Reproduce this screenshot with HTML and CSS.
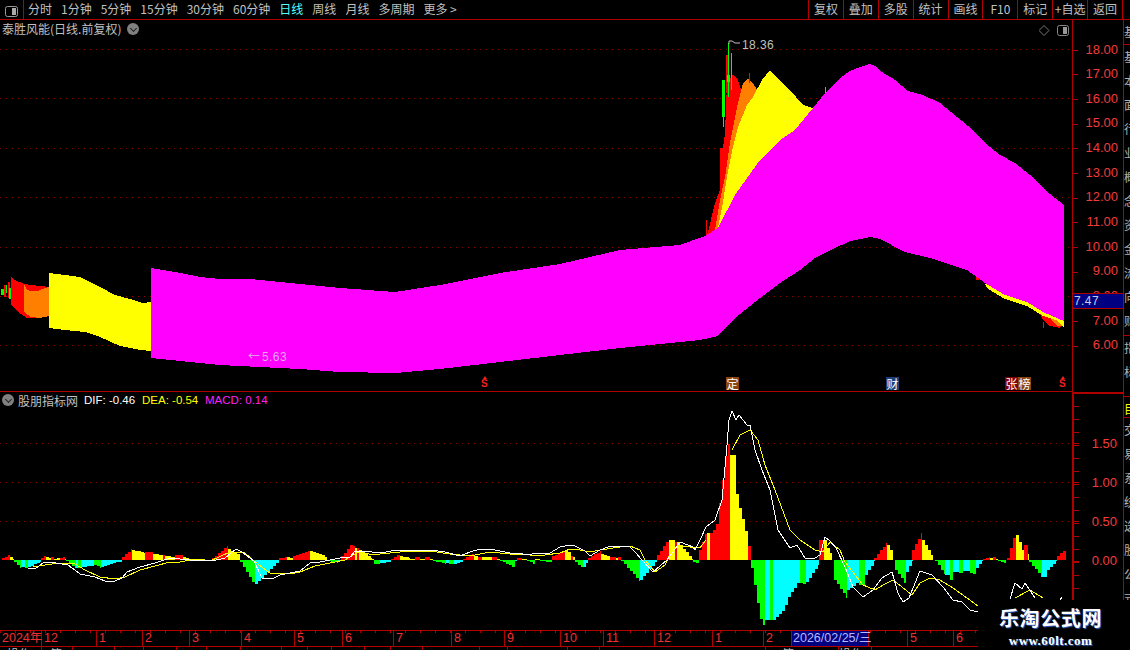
FILE: index.html
```html
<!DOCTYPE html>
<html lang="zh-CN">
<head>
    <meta charset="UTF-8">
    <link rel="stylesheet" href="styles.css">
    <title>泰胜风能</title>
</head>
<body>

<div class="toolbar">
    <div class="layout-btn">
        <svg width="14" height="12" viewBox="0 0 14 12"><rect x="0.5" y="0.5" width="12" height="10" rx="2" fill="none" stroke="#999"/><rect x="7" y="2" width="4" height="7" fill="#aaa"/></svg>
    </div>
    <div class="periods">
        <span>分时</span><span>1分钟</span><span>5分钟</span><span>15分钟</span><span>30分钟</span><span>60分钟</span>
        <span class="active">日线</span><span>周线</span><span>月线</span><span>多周期</span><span>更多 &gt;</span>
    </div>
    <div class="tools">
        <span>复权</span><span>叠加</span><span>多股</span><span>统计</span><span>画线</span><span>F10</span><span>标记</span><span>+自选</span><span>返回</span>
    </div>
</div>

<div class="workspace">
    <div class="charts">
        <div class="price-panel">
            <svg class="chart" width="1072" height="371" viewBox="0 20 1072 371">
                <g class="grid">
                    <line x1="0" x2="1072" y1="49.5" y2="49.5"/><line x1="0" x2="1072" y1="98.5" y2="98.5"/>
                    <line x1="0" x2="1072" y1="148.5" y2="148.5"/><line x1="0" x2="1072" y1="197.5" y2="197.5"/>
                    <line x1="0" x2="1072" y1="247.5" y2="247.5"/><line x1="0" x2="1072" y1="296.5" y2="296.5"/>
                    <line x1="0" x2="1072" y1="345.5" y2="345.5"/>
                </g>
                <g class="bands">
                    <!-- candles at the very start -->
                    <path fill="#ff0000" d="M4 285h2v12h-2zM8 282h2v16h-2z"/>
                    <path fill="#00ff00" d="M1 289h3v6h-3zM6 285h1v8h-1zM9 288h2v11h-2z"/>
                    <polygon fill="#ff0000" points="11,277 15,280 24,284 49,287 49,316 34,318 27,318 18,312 11,305"/>
                    <polygon fill="#ff8000" points="24,284 27,290 31,291 38,291 45,288 49,287 49,316 40,318 31,317 24,312"/>
                    <polygon fill="#ffff00" points="49,273 65,275 80,277 90,282 100,287 115,295 130,299 142,303 151,302 151,351 140,350 120,346 100,337 85,332 65,330 49,328"/>

                    <polygon fill="#ff0000" points="706,236 708,232 715,203 720,190 720,148 723,148 725,133 727,83 733,74 738,80 743,95 750,120 730,230"/>
                    <polygon fill="#ff8000" points="715,230 720,200 725,177 730,143 737,107 743,83 748,79 753,83 757,90 765,120 730,230"/>
                    <polygon fill="#ffff00" points="718,228 722,208 727,177 733,147 738,127 747,105 753,97 762,80 770,70 777,78 790,90 803,105 813,108 830,120 740,220"/>
                    <path fill="#ff0000" d="M706 220h1v16h-1zM749 73h1v10h-1zM721 148h2v20h-2zM726 55h2v38h-2z"/>
                    <path fill="#00ff00" d="M722 80h3v37h-3zM723 117h1v10h-1zM728 43h1v54h-1zM727 75h3v7h-3zM731 53h1v37h-1zM825 87h1v6h-1z"/>

                    <path fill="#ff0000" d="M976 277h3v3h-3zM1043 322h1v6h-1z"/>
                    <polygon fill="#ff0000" points="1037,308 1043,320 1050,326 1060,328 1064,322 1044,308"/>
                    <polygon fill="#ff8000" points="1048,314 1052,321 1057,326 1064,326 1064,318"/>
                    <polygon fill="#ffff00" points="985,284 988,289 1005,299 1027,306 1043,316 1056,320 1064,328 1064,318 1044,308 1027,298 1005,291 988,281"/>
                    <polygon fill="#ff00ff" points="151,268 175,272 200,277 220,279 250,279 300,284 340,288 395,292 440,285 500,273 560,264 620,250 680,245 705,236 718,228 735,195 760,160 780,140 795,130 813,108 825,93 840,78 850,71 860,67 870,64 875,66 882,72 895,80 908,91 923,95 940,103 957,117 973,130 985,143 1000,155 1015,163 1030,175 1045,190 1064,205 1064,321 1043,312 1027,302 1005,295 988,285 967,270 960,268 930,258 905,252 880,239 870,237 850,241 833,249 815,258 800,270 780,283 760,298 735,318 718,336 700,340 620,348 560,355 500,362 440,369 395,373 340,372 300,369 220,365 151,358"/>
                </g>
                <path class="flag" d="M729 41v3M729 41h3l3 2h5" fill="none"/>
            </svg>

            <div class="chart-title">泰胜风能(日线.前复权)<i class="chevron"></i></div>
            <div class="corner-icons">
                <svg width="30" height="12" viewBox="0 0 30 12"><path d="M5 0.5l5 5-5 5-5-5z" fill="none" stroke="#777"/><rect x="18.5" y="0.5" width="11" height="10" rx="2" fill="none" stroke="#888"/><rect x="24" y="2" width="4" height="7" fill="#999"/></svg>
            </div>
            <span class="price-note high">18.36</span>
            <span class="price-note low"><i class="arrow">←</i>5.63</span>
            <span class="mark s-mark s-a">S</span>
            <span class="mark box-mark brown ding">定</span>
            <span class="mark box-mark blue cai">财</span>
            <span class="mark box-mark maroon zhang">张</span>
            <span class="mark box-mark brown bang">榜</span>
            <span class="mark s-mark s-b">S</span>
        </div>

        <div class="macd-panel">
            <svg id="macd" class="chart" width="1072" height="238" viewBox="0 392 1072 238">
                <g class="grid">
                    <line x1="0" x2="1072" y1="443.5" y2="443.5"/>
                    <line x1="0" x2="1072" y1="482.5" y2="482.5"/>
                    <line x1="0" x2="1072" y1="521.5" y2="521.5"/>
                </g>
            </svg>
            <div class="legend">
                <i class="chevron"></i><span class="legend-name">股朋指标网</span>
                <span class="dif">DIF: -0.46</span><span class="dea">DEA: -0.54</span><span class="macd-val">MACD: 0.14</span>
            </div>
        </div>

        <div class="time-axis">
            <div class="months">
                <span class="m" style="width:42px">2024年</span><span class="m" style="width:55px">12</span><span class="m" style="width:46px">1</span><span class="m" style="width:47px">2</span><span class="m" style="width:52px">3</span><span class="m" style="width:53px">4</span><span class="m" style="width:48px">5</span><span class="m" style="width:51px">6</span><span class="m" style="width:58px">7</span><span class="m" style="width:53px">8</span><span class="m" style="width:56px">9</span><span class="m" style="width:43px">10</span><span class="m" style="width:51px">11</span><span class="m" style="width:58px">12</span><span class="m" style="width:51px">1</span><span class="m" style="width:28px">2</span><span class="m date">2026/02/25/三</span><span class="m" style="width:39px"></span><span class="m" style="width:46px">5</span><span class="m" style="width:119px">6</span>
            </div>
            <div class="sub-row">
                <span class="first" style="width:42px">操作</span><span class="second" style="width:31px">筹</span><span style="width:42px"></span><span style="width:29px"></span><span style="width:33px"></span><span style="width:30px"></span><span style="width:34px"></span><span style="width:41px"></span><span style="width:26px"></span><span style="width:24px"></span><span style="width:33px"></span><span style="width:26px"></span><span style="width:32px"></span><span style="width:57px"></span><span style="width:28px"></span><span style="width:60px"></span><span style="width:32px"></span><span style="width:166px"></span><span class="second" style="width:73px">&nbsp;&nbsp;&nbsp;筹</span><span style="width:33px">操作</span>
            </div>
        </div>
    </div>

    <div class="axis">
        <div class="price-axis">
            <div class="tick">18.00</div><div class="tick">17.00</div><div class="tick">16.00</div><div class="tick">15.00</div><div class="tick">14.00</div><div class="tick">13.00</div><div class="tick">12.00</div><div class="tick">11.00</div><div class="tick">10.00</div><div class="tick">9.00</div><div class="tick">8.00</div><div class="tick">7.00</div><div class="tick">6.00</div>
            <div class="last-price">7.47</div>
        </div>
        <div class="macd-axis">
            <div class="tick">1.50</div><div class="tick">1.00</div><div class="tick">0.50</div><div class="tick">0.00</div>
        </div>
    </div>

    <div class="sidebar">
        <div class="side-cell short">基</div>
        <div class="side-cell tall">基<br>本<br>面<br>行<br>业<br>概<br>念<br>资<br>金<br>流<br>向<br>财<br>务</div>
        <div class="side-cell mid">指<br>标</div>
        <div class="side-cell flagged">目</div>
        <div class="side-cell rest">交<br>易<br>系<br>统<br>选<br>股<br>公<br>式</div>
    </div>
</div>

<div class="watermark">
    <div class="wm-name">乐淘公式网</div>
    <div class="wm-url">www.60lt.com</div>
</div>

<script src="charts.js"></script>
</body>
</html>
```

FILE: styles.css
```css
* {
    box-sizing: border-box;
}

body {
    margin: 0;
    width: 1130px;
    height: 650px;
    overflow: hidden;
    position: relative;
    background-color: #000;
    color: #c0c0c0;
    font-family: "Noto Sans CJK SC", "Liberation Sans", sans-serif;
    font-size: 12px;
}

.toolbar {
    display: flex;
    height: 20px;
    border-bottom: 1px solid #b00000;
    line-height: 18px;
}

.layout-btn {
    width: 24px;
    padding: 4px 0 0 5px;
    border-right: 1px solid #b00000;
}

.periods {
    display: flex;
    gap: 9px;
    padding-left: 4px;
    white-space: nowrap;
}

.periods .active {
    color: #55ffff;
}

.tools {
    display: flex;
    margin-left: auto;
    margin-right: 7px;
    border-right: 1px solid #b00000;
}

.tools span {
    width: 34.9px;
    text-align: center;
    border-left: 1px solid #b00000;
    white-space: nowrap;
}

.workspace {
    display: flex;
    height: 630px;
}

.charts {
    width: 1072px;
}

.chart {
    display: block;
}

.chart .grid line {
    stroke: #900000;
    stroke-dasharray: 1 5;
    shape-rendering: crispEdges;
}

.bands polygon, .bands path {
    shape-rendering: crispEdges;
}

.flag {
    stroke: #c0c0c0;
}

.price-panel {
    position: relative;
    height: 372px;
    border-bottom: 1px solid #b00000;
}

.chart-title {
    position: absolute;
    left: 2px;
    top: 0;
    line-height: 18px;
    font-size: 12px;
    display: flex;
    align-items: center;
}

.chevron {
    display: inline-block;
    width: 12px;
    height: 12px;
    border-radius: 50%;
    background-color: #808080;
    position: relative;
}

.chart-title .chevron {
    margin-left: 6px;
}

.chevron::after {
    content: "";
    position: absolute;
    left: 3.5px;
    top: 2.5px;
    width: 4px;
    height: 4px;
    border-right: 1.5px solid #222;
    border-bottom: 1.5px solid #222;
    transform: rotate(45deg);
}

.corner-icons {
    position: absolute;
    right: 3px;
    top: 5px;
    line-height: 0;
}

.price-note {
    position: absolute;
    font-family: "Liberation Sans", sans-serif;
    font-size: 12px;
    letter-spacing: 0.4px;
}

.high {
    left: 742px;
    top: 18px;
}

.low {
    left: 248px;
    top: 327px;
    color: #e8a8e8;
}

.arrow {
    font-family: "Noto Sans CJK SC", sans-serif;
    font-style: normal;
    letter-spacing: 0;
    margin-right: 2px;
}

.mark {
    position: absolute;
}

.s-mark {
    top: 358px;
    color: #f02020;
    font-family: "Liberation Sans", sans-serif;
    font-size: 10px;
    font-weight: bold;
    line-height: 12px;
}

.s-mark::before {
    content: "";
    position: absolute;
    left: 1.5px;
    top: -2px;
    border-left: 2.5px solid transparent;
    border-right: 2.5px solid transparent;
    border-bottom: 3px solid #f02020;
}

.s-a {
    left: 481px;
}

.s-b {
    left: 1059px;
}

.box-mark {
    top: 357px;
    width: 13px;
    height: 13px;
    line-height: 13px;
    font-size: 12px;
    text-align: center;
    color: #fff;
}

.brown {
    background-color: #8b4513;
}

.maroon {
    background-color: #800000;
}

.blue {
    background-color: #1c3f7a;
}

.ding {
    left: 726px;
}

.cai {
    left: 886px;
}

.zhang {
    left: 1005px;
}

.bang {
    left: 1018px;
}

.macd-panel {
    position: relative;
    height: 238px;
}

.legend {
    position: absolute;
    left: 2px;
    top: 0;
    display: flex;
    align-items: center;
    height: 16px;
    font-family: "Liberation Sans", "Noto Sans CJK SC", sans-serif;
    font-size: 11.5px;
    white-space: nowrap;
}

.legend-name {
    margin: 0 6px 0 4px;
    font-size: 12px;
    font-family: "Noto Sans CJK SC", sans-serif;
}

.dif {
    color: #fff;
    width: 58px;
}

.dea {
    color: #ffff00;
    width: 63px;
}

.macd-val {
    color: #ff20ff;
}

.time-axis {
    height: 20px;
    border-top: 1px solid #b00000;
    background-image: repeating-linear-gradient(90deg, #b00000 0 1px, transparent 1px 15px);
    background-size: 100% 2px;
    background-repeat: no-repeat;
    overflow: hidden;
}

.months {
    display: flex;
    height: 15px;
    border-bottom: 1px solid #b00000;
    box-sizing: content-box;
    font-family: "Liberation Sans", "Noto Sans CJK SC", sans-serif;
    font-size: 12.5px;
    line-height: 15px;
    color: #f03030;
}

.m {
    flex: none;
    padding-left: 2px;
    border-right: 1px solid #b00000;
    white-space: nowrap;
}

.date {
    width: 77px;
    background-color: #000080;
    color: #b8b8ff;
    font-size: 12.5px;
    padding-left: 1px;
}

.sub-row {
    display: flex;
    height: 4px;
    line-height: 14px;
    font-size: 12px;
}

.sub-row span {
    flex: none;
    border-right: 1px solid #b00000;
    overflow: hidden;
    white-space: nowrap;
}

.sub-row .first {
    padding-left: 7px;
}

.sub-row .second {
    padding-left: 8px;
}

.axis {
    width: 51px;
    border-left: 1px solid #b00000;
    font-family: "Liberation Sans", sans-serif;
    font-size: 13px;
    color: #f03c3c;
}

.tick {
    position: relative;
    text-align: right;
    padding-right: 5px;
}

.tick::before {
    content: "";
    position: absolute;
    left: 0;
    top: 50%;
    width: 5px;
    height: 1px;
    background-color: #b00000;
}

.price-axis {
    position: relative;
    height: 372px;
    padding-top: 17.5px;
}

.price-axis .tick {
    height: 24.67px;
    line-height: 24.67px;
}

.last-price {
    position: absolute;
    left: 0;
    right: 0;
    top: 273px;
    height: 16px;
    line-height: 14px;
    padding-left: 1px;
    background-color: #000080;
    border-top: 1px solid #b00000;
    border-bottom: 1px solid #b00000;
    color: #c0d0e8;
    font-size: 12px;
    letter-spacing: 0.4px;
}

.macd-axis {
    height: 258px;
    margin-left: -1px;
    border-left: 2px solid #b00000;
    border-top: 2px solid #b00000;
    padding-top: 29.5px;
    background-image: repeating-linear-gradient(180deg, transparent 0 12px, #b00000 12px 13px);
    background-size: 5px 100%;
    background-repeat: no-repeat;
}

.macd-axis .tick {
    height: 39.2px;
    line-height: 39.2px;
    padding-right: 6px;
}

.sidebar {
    width: 7px;
    border-left: 1px solid #b00000;
    overflow: hidden;
    font-size: 12px;
    line-height: 24px;
    color: #b0b0b0;
    display: flex;
    flex-direction: column;
}

.side-cell {
    overflow: hidden;
    border-bottom: 1px solid #b00000;
    flex: none;
    width: 12px;
}

.short {
    height: 25px;
}

.tall {
    height: 291px;
}

.mid {
    height: 61px;
}

.flagged {
    height: 21px;
    color: #ffff00;
}

.rest {
    border-bottom: 0;
    height: 200px;
}

.watermark {
    position: absolute;
    left: 978px;
    top: 600px;
    width: 152px;
    height: 50px;
    background-color: #000;
    text-align: center;
    color: #fff;
    padding-right: 7px;
}

.wm-name {
    margin-top: 7px;
    font-size: 20px;
    line-height: 22px;
    font-weight: bold;
    letter-spacing: 0.6px;
    text-shadow: 1px 1px 1px #3060c0;
}

.wm-url {
    margin-top: 5px;
    font-family: "Liberation Serif", serif;
    font-size: 13px;
    line-height: 13px;
    font-weight: bold;
    letter-spacing: 0.45px;
    text-shadow: 1px 1px 1px #3060c0;
}
```

FILE: charts.js
```js
// histogram runs: colour, start x, end x, heights (interpolated along the run)
const colores = { r: '#ff0000', y: '#ffff00', g: '#00ff00', c: '#00ffff' };
const corridas = [
    ['r',2,10,[2,5]],['y',10,14,[3,1]],
    ['g',14,21,[-2,-8]],['c',21,25,[-7]],['g',25,28,[-8]],['c',28,41,[-7,-2]],
    ['r',41,46,[2,5]],['y',46,51,[3,2]],['r',51,54,[3]],['y',54,60,[1,2]],['r',60,65,[2,3]],['y',65,66,[1]],
    ['g',66,76,[-1,-8]],['c',76,78,[-8]],['g',78,81,[-8]],['c',81,94,[-7,-6]],['g',94,101,[-5,-8]],['c',101,122,[-7,-1]],
    ['r',122,132,[3,11]],['y',132,145,[10,7]],['r',145,153,[8]],['y',153,163,[6,5]],['r',163,165,[5]],['y',165,175,[4,3]],['r',175,183,[5]],['y',183,190,[3,1]],
    ['c',190,200,[-1]],['y',200,205,[1]],['g',205,212,[-1]],
    ['r',212,228,[2,14]],['y',228,240,[11,5]],
    ['g',240,255,[-2,-25]],['c',255,279,[-24,-1]],
    ['r',279,287,[2,3]],['y',287,293,[3,2]],['r',293,310,[4,9]],['y',310,327,[9,3]],
    ['g',328,338,[-1,-3]],['c',338,341,[-1]],
    ['r',341,350,[4,13]],['r',350,355,[15,14]],['y',355,357,[12]],['r',357,359,[12]],['y',359,372,[10,2]],['y',372,374,[1]],
    ['g',374,380,[-4]],['c',380,391,[-3,-2]],
    ['r',391,400,[1,6]],['y',400,410,[4,2]],['y',410,415,[1]],['r',415,420,[3]],['y',420,425,[1]],['r',425,430,[3]],['y',430,433,[1]],
    ['g',433,446,[-1,-4]],['c',446,449,[-3]],['g',449,454,[-4]],['c',454,463,[-4,-1]],
    ['r',463,474,[1,6]],['y',474,478,[4]],['r',478,482,[3]],['y',482,492,[3]],['r',492,497,[3]],['y',497,500,[1]],
    ['g',500,515,[-1,-8]],['c',515,517,[-1]],['r',517,522,[2]],['y',522,527,[1]],['g',527,535,[-1,-4]],['y',535,540,[1]],['g',540,552,[-1,-2]],
    ['r',552,565,[4,9]],['y',565,571,[9,7]],['r',571,573,[4]],['y',573,575,[3]],
    ['g',575,583,[-2,-8]],['c',583,588,[-7,-2]],
    ['r',588,601,[2,9]],['y',601,610,[6,3]],['r',610,616,[3]],['y',616,618,[2]],['r',618,621,[3]],
    ['g',621,640,[-1,-21]],['c',640,657,[-20,-1]],
    ['r',657,669,[5,21]],['y',669,675,[20]],['r',675,677,[18]],['y',677,693,[18,1]],
    ['g',693,699,[-2,-4]],
    ['r',699,707,[10,29]],['y',707,710,[27]],['r',710,730,[27,30,37,61,85,111,118]],
    ['y',730,748,[105,105,54,51,32,24]],['r',748,751,[14]],
    ['g',751,765,[-8,-33,-58,-67]],['c',765,770,[-60]],['g',770,773,[-60]],['c',773,800,[-60,-55,-50,-35,-28,-20]],
    ['g',800,806,[-23,-25]],['c',806,819,[-22,-5]],
    ['r',819,824,[20]],['y',824,827,[20]],['y',827,832,[12,5]],
    ['g',834,847,[-20,-38]],['c',847,859,[-30,-22]],['g',859,865,[-25]],['c',865,875,[-15,-1]],
    ['r',874,887,[2,17]],['y',887,893,[15,6]],
    ['g',895,906,[-10,-24]],['c',906,913,[-12,-1]],
    ['r',912,922,[10,27]],['y',922,933,[20,3]],
    ['g',935,945,[-1,-14]],['c',945,950,[-15]],['g',950,953,[-20]],['c',953,959,[-12]],['g',959,963,[-13]],['c',963,970,[-11]],['g',970,976,[-13,-14]],['c',976,983,[-8,-1]],
    ['r',983,990,[1,3]],['y',990,993,[2]],['r',993,996,[3]],['y',996,998,[1]],['g',998,1006,[-1,-3]],
    ['r',1007,1016,[2,29]],['y',1016,1024,[25,8]],['r',1024,1028,[15]],['y',1028,1029,[6]],
    ['g',1029,1042,[-2,-17]],['c',1042,1047,[-17]],['c',1047,1057,[-10,-1]],['r',1057,1066,[4,11]]
];

const blanca = [
    [[28,568],[35,569],[43,563],[50,562],[68,565],[80,574],[95,577],[105,581],[115,581],[122,578],[127,572],[140,567],[155,563],[170,558],[190,560],[212,561],[225,558],[236,549],[242,552],[250,558],[254,561],[262,578],[272,579],[280,575],[300,571],[310,563],[320,562],[340,558],[350,557],[355,551],[372,552],[380,553],[397,550],[420,550],[430,550],[445,552],[460,556],[470,552],[480,549],[495,550],[510,553],[520,553],[525,555],[540,553],[550,553],[560,547],[570,545],[575,546],[585,551],[590,556],[600,550],[608,547],[620,546],[630,547],[635,552],[642,560],[653,572],[667,560],[680,542],[693,547],[695,550],[700,540],[706,527],[715,520],[722,500],[727,445],[729,420],[732,411],[736,420],[739,415],[747,425],[750,425],[755,450],[762,470],[770,490],[778,530],[790,548],[797,545],[805,558],[815,558],[820,555],[825,537],[830,541],[836,548],[845,567],[853,587],[863,597],[873,590],[882,578],[892,572],[898,593],[903,602],[909,598],[920,571],[932,575],[943,587],[953,600],[962,602],[970,610],[978,612]],
    [[1010,599],[1015,583],[1022,589],[1025,583],[1035,598]],
    [[1060,600],[1062,597]]
];
const amarilla = [
    [[33,567],[45,565],[60,563],[75,564],[85,570],[100,577],[115,579],[125,577],[140,570],[155,566],[170,562],[180,562],[195,559],[210,561],[230,552],[245,553],[254,561],[270,573],[290,574],[300,572],[315,566],[330,563],[345,560],[358,552],[375,555],[380,554],[400,552],[430,551],[450,554],[470,556],[490,552],[510,554],[530,555],[545,555],[560,553],[570,549],[580,550],[590,552],[600,550],[620,547],[630,546],[640,550],[645,560],[655,572],[665,565],[672,550],[680,546],[700,548],[706,540]],
    [[732,450],[740,435],[750,430],[758,440],[765,465],[775,490],[790,530],[800,540],[815,550],[823,552],[830,542],[840,550],[845,562],[863,585],[875,590],[883,585],[893,580],[902,587],[912,595],[920,583],[930,578],[940,580],[953,588],[967,598],[978,606]],
    [[1015,598],[1030,590],[1043,598]]
];

const CERO = 560;
const svg = document.getElementById('macd');
const NS = 'http://www.w3.org/2000/svg';

function dibujarBarra(color, x, ancho, alto) {
    const r = document.createElementNS(NS, 'rect');
    r.setAttribute('x', x);
    r.setAttribute('width', ancho);
    r.setAttribute('y', alto > 0 ? CERO - alto : CERO);
    r.setAttribute('height', Math.abs(alto));
    r.setAttribute('fill', colores[color]);
    r.setAttribute('shape-rendering', 'crispEdges');
    svg.appendChild(r);
}

corridas.forEach(function (c) {
    const xs = c[2] - c[1];
    const alturas = c[3];
    for (let x = c[1]; x < c[2]; x += 3) {
        const t = xs > 3 ? (x - c[1]) / (xs - 1) : 0;
        const p = t * (alturas.length - 1);
        const i = Math.floor(p);
        const sig = alturas[Math.min(i + 1, alturas.length - 1)];
        const h = Math.round(alturas[i] + (sig - alturas[i]) * (p - i));
        dibujarBarra(c[0], x, Math.min(3, c[2] - x), h);
    }
});

function dibujarLinea(tramos, color) {
    tramos.forEach(function (puntos) {
        const l = document.createElementNS(NS, 'polyline');
        l.setAttribute('points', puntos.join(' '));
        l.setAttribute('fill', 'none');
        l.setAttribute('stroke', color);
        l.setAttribute('shape-rendering', 'crispEdges');
        svg.appendChild(l);
    });
}

dibujarLinea(amarilla, '#ffff00');
dibujarLinea(blanca, '#ffffff');
```
